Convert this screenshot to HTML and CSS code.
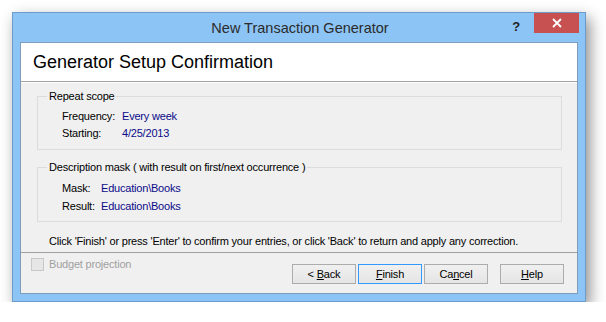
FILE: index.html
```html
<!DOCTYPE html>
<html lang="en">
<head>
    <meta charset="UTF-8">
    <title>New Transaction Generator</title>
    <link rel="stylesheet" href="styles.css">
</head>
<body>
    <div class="window">
        <div class="titlebar">
            <span class="title">New Transaction Generator</span>
            <span class="help-btn">?</span>
            <span class="close-btn">
                <svg width="10" height="10" viewBox="0 0 10 10"><path d="M1 1 L9 9 M9 1 L1 9" stroke="#fff" stroke-width="1.8"/></svg>
            </span>
        </div>
        <div class="client">
            <div class="header">Generator Setup Confirmation</div>
            <div class="content">
                <fieldset class="group">
                    <legend>Repeat scope</legend>
                    <div class="rows">
                        <div class="row"><span class="label lbl-wide">Frequency:</span><span class="value">Every week</span></div>
                        <div class="row"><span class="label lbl-wide">Starting:</span><span class="value">4/25/2013</span></div>
                    </div>
                </fieldset>
                <fieldset class="group group-mask">
                    <legend>Description mask ( with result on first/next occurrence )</legend>
                    <div class="rows">
                        <div class="row"><span class="label lbl-narrow">Mask:</span><span class="value">Education\Books</span></div>
                        <div class="row"><span class="label lbl-narrow">Result:</span><span class="value">Education\Books</span></div>
                    </div>
                </fieldset>
                <p class="hint">Click 'Finish' or press 'Enter' to confirm your entries, or click 'Back' to return and apply any correction.</p>
            </div>
            <div class="footer">
                <label class="check"><span class="box"></span>Budget projection</label>
                <div class="buttons">
                    <button class="btn">&lt; <u>B</u>ack</button>
                    <button class="btn btn-default"><u>F</u>inish</button>
                    <button class="btn">Ca<u>n</u>cel</button>
                    <button class="btn btn-help"><u>H</u>elp</button>
                </div>
            </div>
        </div>
    </div>
</body>
</html>
```

FILE: styles.css
```css
body {
    margin: 0;
    background-color: #ffffff;
    font-family: "Liberation Sans", Arial, sans-serif;
    font-size: 11px;
    letter-spacing: -0.2px;
    color: #000;
}
.window {
    margin: 12px 0 0 12px;
    width: 574px;
    height: 290px;
    box-sizing: border-box;
    border: 1px solid #6c9cc9;
    background-color: #8cc4f5;
    box-shadow: 4px 6px 14px rgba(0,0,0,0.45);
    padding: 0 7px 7px 7px;
    display: flex;
    flex-direction: column;
}
.titlebar {
    position: relative;
    height: 29px;
    display: flex;
    justify-content: center;
    align-items: center;
}
.title {
    font-size: 14.5px;
    letter-spacing: 0;
    color: #2b2b2b;
    margin-left: 2px;
}
.help-btn {
    position: absolute;
    right: 58px;
    top: 6px;
    font-weight: bold;
    font-size: 13px;
    color: #222;
}
.close-btn {
    position: absolute;
    right: -1px;
    top: 0;
    width: 45px;
    height: 20px;
    background-color: #c75050;
    display: flex;
    justify-content: center;
    align-items: center;
}
.client {
    flex: 1;
    background-color: #f0f0f0;
    border: 1px solid #7f9db9;
    display: flex;
    flex-direction: column;
}
.header {
    height: 38px;
    background-color: #fff;
    border-bottom: 1px solid #a0a0a0;
    font-size: 18px;
    letter-spacing: 0;
    padding-left: 12px;
    line-height: 39px;
}
.content {
    padding: 6px 15px 0 16px;
    border-top: 1px solid #fff;
}
.group {
    margin: 0;
    padding: 0;
    border: 1px solid #dcdcdc;
}
.group legend {
    margin-left: 9px;
    padding: 0 2px;
    line-height: 14px;
}
.rows {
    padding: 5px 0 7px 24px;
}
.row {
    line-height: 17px;
    display: flex;
}
.group-mask .row {
    line-height: 18px;
}
.label.lbl-wide {
    width: 60px;
}
.label.lbl-narrow {
    width: 39px;
}
.value {
    color: #0b0b8a;
}
.group-mask {
    margin-top: 10px;
}
.group-mask .rows {
    padding-bottom: 6px;
}
.hint {
    margin: 12px 0 0 12px;
    line-height: 14px;
}
.footer {
    margin-top: auto;
    height: 41px;
    border-top: 1px solid #a0a0a0;
    display: flex;
    justify-content: space-between;
    align-items: flex-start;
    padding: 5px 13px 0 10px;
    box-sizing: border-box;
}
.check {
    display: flex;
    align-items: center;
    color: #a0a0a0;
    line-height: 13px;
}
.box {
    width: 11px;
    height: 11px;
    border: 1px solid #c8c8c8;
    background-color: #e6e6e6;
    margin-right: 5px;
}
.buttons {
    display: flex;
    gap: 2px;
    margin-top: 6px;
}
.btn {
    width: 64px;
    height: 20px;
    padding: 0;
    font-family: inherit;
    font-size: 11px;
    letter-spacing: -0.2px;
    color: #000;
    border: 1px solid #acacac;
    background: linear-gradient(#f0f0f0, #e5e5e5);
}
.btn-default {
    border-color: #3399ff;
}
.btn-help {
    margin-left: 10px;
}
```
